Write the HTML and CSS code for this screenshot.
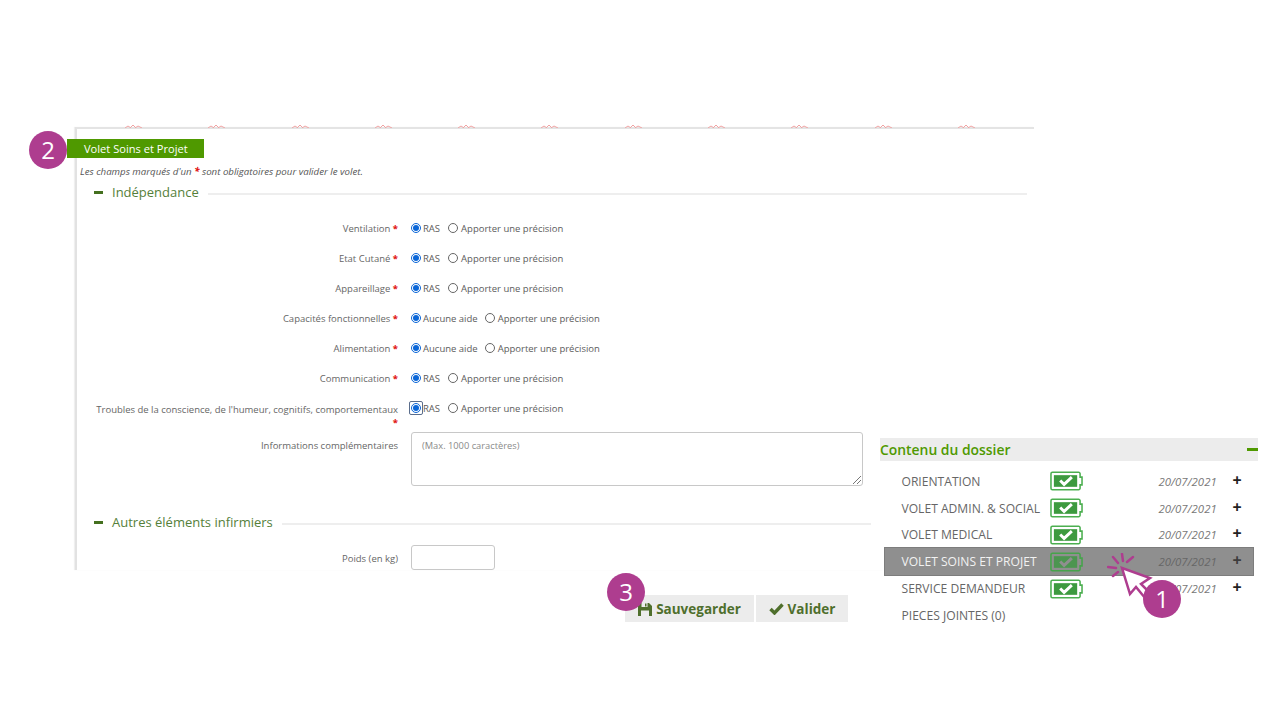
FILE: index.html
```html
<!DOCTYPE html>
<html lang="fr">
<head>
<meta charset="utf-8">
<title>Volet Soins et Projet</title>
<link rel="stylesheet" href="styles.css">
</head>
<body>
<svg width="0" height="0" class="defs">
  <defs>
    <symbol id="bat" viewBox="0 0 34 20">
      <path d="M2.500 1h27a1.500 1.500 0 0 1 1.500 1.500V6h2v8h-2v3.500a1.500 1.500 0 0 1-1.500 1.500h-27A1.500 1.500 0 0 1 1 17.500v-15A1.500 1.500 0 0 1 2.500 1z" class="bat-body"/>
      <rect x="4" y="4" width="24" height="12" class="bat-fill"/>
      <path d="M10.500 9.500l4 4 8-7.500" class="bat-check"/>
    </symbol>
    <symbol id="mark" viewBox="0 0 17 3">
      <path d="M0 3l3-2 3 2M5 3l3-3 3 3M10 3l3-2 4 2" fill="none" stroke="#f0a3a3" stroke-width="1"/>
    </symbol>
  </defs>
</svg>
<main class="slide">
  <section class="form-panel">
    <div class="marks">
      <svg class="mark"><use href="#mark"/></svg><svg class="mark"><use href="#mark"/></svg><svg class="mark"><use href="#mark"/></svg><svg class="mark"><use href="#mark"/></svg><svg class="mark"><use href="#mark"/></svg><svg class="mark"><use href="#mark"/></svg><svg class="mark"><use href="#mark"/></svg><svg class="mark"><use href="#mark"/></svg><svg class="mark"><use href="#mark"/></svg><svg class="mark"><use href="#mark"/></svg><svg class="mark"><use href="#mark"/></svg>
    </div>
    <div class="tab">Volet Soins et Projet</div>
    <p class="note">Les champs marqués d'un <b>*</b> sont obligatoires pour valider le volet.</p>
    <h2 class="legend legend-first"><span class="dash"></span>Indépendance<span class="rule"></span></h2>
    <div class="rows">
      <div class="row"><label>Ventilation <b>*</b></label><div class="opts"><span class="radio on"></span><span class="opt">RAS</span><span class="radio"></span><span>Apporter une précision</span></div></div>
      <div class="row"><label>Etat Cutané <b>*</b></label><div class="opts"><span class="radio on"></span><span class="opt">RAS</span><span class="radio"></span><span>Apporter une précision</span></div></div>
      <div class="row"><label>Appareillage <b>*</b></label><div class="opts"><span class="radio on"></span><span class="opt">RAS</span><span class="radio"></span><span>Apporter une précision</span></div></div>
      <div class="row"><label>Capacités fonctionnelles <b>*</b></label><div class="opts"><span class="radio on"></span><span class="opt opt-aide">Aucune aide</span><span class="radio"></span><span>Apporter une précision</span></div></div>
      <div class="row"><label>Alimentation <b>*</b></label><div class="opts"><span class="radio on"></span><span class="opt opt-aide">Aucune aide</span><span class="radio"></span><span>Apporter une précision</span></div></div>
      <div class="row"><label>Communication <b>*</b></label><div class="opts"><span class="radio on"></span><span class="opt">RAS</span><span class="radio"></span><span>Apporter une précision</span></div></div>
      <div class="row row-tall"><label>Troubles de la conscience, de l'humeur, cognitifs, comportementaux <b>*</b></label><div class="opts"><span class="radio on focus"></span><span class="opt">RAS</span><span class="radio"></span><span>Apporter une précision</span></div></div>
      <div class="row row-text"><label>Informations complémentaires</label><div class="textarea">(Max. 1000 caractères)<svg class="grip" width="9" height="9" viewBox="0 0 9 9"><path d="M1 9l8-8M5 9l4-4" stroke="#777" stroke-width="1"/></svg></div></div>
    </div>
    <h2 class="legend legend-second"><span class="dash"></span>Autres éléments infirmiers<span class="rule"></span></h2>
    <div class="row row-input"><label>Poids (en kg)</label><div class="input"></div></div>
  </section>

  <div class="actions">
    <button class="btn btn-save" type="button">
      <svg width="14" height="14" viewBox="0 0 14 14"><path d="M0 1h11l3 3v10H0z" fill="#4f6f2c"/><rect x="3.500" y="1" width="6" height="4" fill="#ececec"/><rect x="7" y="1.500" width="1.500" height="3" fill="#4f6f2c"/><rect x="3" y="8.500" width="8" height="5.500" fill="#ececec"/></svg>Sauvegarder</button>
    <button class="btn btn-ok" type="button">
      <svg width="15" height="12" viewBox="0 0 15 12"><path d="M1.500 6l4 4 8-8.500" fill="none" stroke="#4f6f2c" stroke-width="3.400"/></svg>Valider</button>
  </div>

  <aside class="dossier">
    <h3 class="dossier-head">Contenu du dossier<span class="dossier-minus"></span></h3>
    <ul class="list">
      <li class="item"><span class="item-name">ORIENTATION</span><svg class="bat"><use href="#bat"/></svg><em>20/07/2021</em><span class="plus">+</span></li>
      <li class="item"><span class="item-name">VOLET ADMIN. &amp; SOCIAL</span><svg class="bat"><use href="#bat"/></svg><em>20/07/2021</em><span class="plus">+</span></li>
      <li class="item"><span class="item-name">VOLET MEDICAL</span><svg class="bat"><use href="#bat"/></svg><em>20/07/2021</em><span class="plus">+</span></li>
      <li class="item item-active"><span class="item-name">VOLET SOINS ET PROJET</span><svg class="bat"><use href="#bat"/></svg><em>20/07/2021</em><span class="plus">+</span></li>
      <li class="item"><span class="item-name">SERVICE DEMANDEUR</span><svg class="bat"><use href="#bat"/></svg><em>20/07/2021</em><span class="plus">+</span></li>
      <li class="item"><span class="item-name">PIECES JOINTES (0)</span></li>
    </ul>
  </aside>

  <svg class="cursor" width="54" height="56" viewBox="0 0 54 56">
    <g stroke="#ae3d8f" stroke-width="2.500" fill="none" stroke-linecap="round">
      <path d="M15 1l1 7M26 4l-6 5M1 14l8 1M6 23l5-4M6 4l5 6"/>
      <path d="M15 15l28 10-9 6 9 9-5 5-9-11-6 7z" fill="#fff" stroke-linejoin="miter"/>
    </g>
  </svg>

  <div class="bubble bubble-1">1</div>
  <div class="bubble bubble-2">2</div>
  <div class="bubble bubble-3">3</div>
</main>
</body>
</html>
```
FILE: styles.css
```css
* { box-sizing: border-box; }
html, body { margin: 0; padding: 0; background: #fff; }
body { font-family: "Open Sans", "Noto Sans", sans-serif; color: #595959; }
.defs { position: absolute; }
.slide { position: relative; width: 1280px; height: 720px; overflow: hidden; }

.form-panel {
  position: absolute; left: 75px; top: 127px; width: 959px; height: 443px;
  border-top: 2px solid #e4e4e4; border-left: 2px solid #e2e2e2;
  box-shadow: -1px 0 1px #efefef;
}
.marks { position: absolute; left: 48px; top: -4px; display: flex; gap: 66.300px; }
.mark { display: block; width: 17px; height: 3px; flex: none; }

.tab {
  position: absolute; left: -10px; top: 10px; width: 137px; height: 19px;
  background: #4f9900; color: #fff; font-size: 11.100px; line-height: 20px; padding-left: 17px;
}
.note { margin: 0; padding: 37px 0 0 3px; font-size: 9.700px; line-height: 12px; font-style: italic; color: #555; }
.note b { color: #e01010; font-weight: 700; }

.legend { display: flex; align-items: center; margin: 0; font-weight: 400; font-size: 13px; line-height: 18px; color: #55803a; }
.legend-first { padding: 5px 7px 0 17px; }
.legend-second { padding: 0 163px 0 17px; margin-top: 27px; }
.dash { width: 9px; height: 3px; background: #44701f; margin-right: 9px; }
.rule { flex: 1; height: 1.500px; background: #eeeeee; margin: 4px 0 0 9px; }

.rows { padding-top: 21px; }
.row { display: flex; height: 30px; font-size: 9.500px; }
.row label { width: 321px; flex: none; text-align: right; line-height: 12px; padding-top: 1px; color: #666; }
.row label b { color: #e01010; }
.opts { display: flex; align-items: flex-start; margin-left: 13px; line-height: 12px; padding-top: 1px; color: #5c5c5c; }
.radio { position: relative; width: 10px; height: 10px; border: 1px solid #666; border-radius: 50%; margin-right: 2px; flex: none; background: #fff; }
.opt + .radio { margin-right: 3px; }
.radio.on { border-color: #0a66d8; }
.radio.on::after { content: ""; position: absolute; inset: 1px; background: #0a66d8; border-radius: 50%; }
.radio.focus::before { content: ""; position: absolute; inset: -3px; border: 1.500px solid #5a6d8c; border-radius: 2px; }
.opt { margin-right: 8px; }
.opt-aide { margin-right: 7px; }
.row-tall label { line-height: 13px; padding-left: 18px; }
.row-text { height: 54px; }
.row-text label { padding-top: 8px; }
.textarea {
  position: relative; margin-left: 13px; width: 452px; height: 54px;
  border: 1px solid #c8c8c8; border-radius: 3px; padding: 7px 10px; font-size: 9.300px; line-height: 12px; color: #8a8a8a;
}
.grip { position: absolute; right: 1px; bottom: 1px; }
.row-input { margin-top: 14px; height: 25px; }
.row-input label { padding-top: 8px; }
.input { margin-left: 13px; width: 84px; height: 25px; border: 1px solid #c8c8c8; border-radius: 3px; }

.actions { position: absolute; left: 625px; top: 595px; display: flex; gap: 2px; }
.btn {
  display: flex; align-items: center; justify-content: center; gap: 4px; height: 27px; border: 0; padding: 0; background: #ececec;
  font-family: "Open Sans", sans-serif; font-weight: 700; font-size: 13.500px; color: #4f6f2c;
}
.btn-save { width: 129px; }
.btn-ok { width: 92px; }

.dossier { position: absolute; left: 880px; top: 438px; width: 378px; }
.dossier-head {
  display: flex; justify-content: space-between; align-items: center; margin: 0; height: 23px; padding-bottom: 1px;
  background: #ececec; color: #4f9900; font-size: 13.900px; font-weight: 600;
}
.dossier-minus { width: 11px; height: 3px; background: #4f9900; }
.list { list-style: none; margin: 7px 0 0; padding: 0; }
.item { display: flex; align-items: center; height: 26.800px; padding-left: 21.500px; font-size: 12.100px; color: #666; }
.item-name { width: 148px; flex: none; white-space: nowrap; }
.bat { width: 33px; height: 20px; flex: none; }
.bat-body { fill: var(--bat-bg, #fff); stroke: var(--bat-line, #4caf50); stroke-width: 1.600; }
.bat-fill { fill: var(--bat-fill, #3d9a3f); }
.bat-check { fill: none; stroke: var(--bat-check, #fff); stroke-width: 3; }
.item em { margin-left: 76px; width: 58px; flex: none; font-size: 11.400px; color: #777; white-space: nowrap; }
.plus { margin-left: 16px; margin-top: -3px; font-size: 16px; font-weight: 700; line-height: 16px; color: #222; }

.item-active {
  height: 29px; margin: -1px 4px; padding-left: 16.500px;
  background: #8f8f8f; border: 1px solid #7d7d7d; color: #f2f2f2;
  --bat-bg: #8f8f8f; --bat-line: #46a44b; --bat-fill: #4c9550; --bat-check: #8f8f8f;
}
.item-active em { color: #666; }
.item-active .plus { color: #3c3c3c; }

.cursor { position: absolute; left: 1107px; top: 553px; }
.bubble {
  position: absolute; width: 38px; height: 38px; border-radius: 50%; background: #ae3d8f; color: #fff;
  font-size: 24px; line-height: 37px; text-align: center; font-weight: 400;
}
.bubble-1 { left: 1143px; top: 580px; }
.bubble-2 { left: 29px; top: 131px; }
.bubble-3 { left: 607px; top: 573px; }
```
